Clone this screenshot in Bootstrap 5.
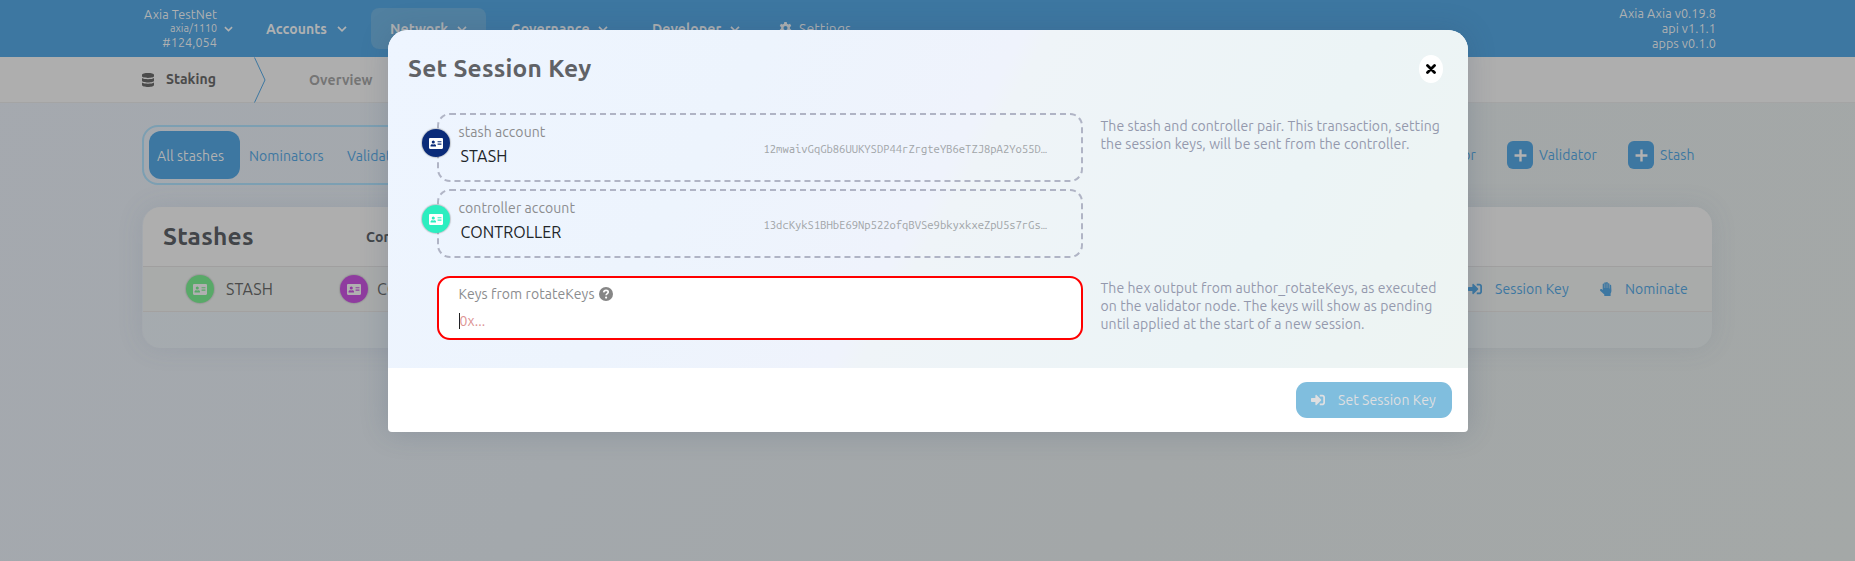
<!DOCTYPE html>
<html lang="en">
<head>
<meta charset="utf-8">
<title>Staking</title>
<link href="https://cdn.jsdelivr.net/npm/bootstrap@5.3.0/dist/css/bootstrap.min.css" rel="stylesheet">
<style>
:root{--blue:#3d77a1}
body{font-family:Ubuntu,"Noto Sans",sans-serif;font-size:14px;line-height:18px;color:#4b4b4b;min-height:561px;background:linear-gradient(120deg,#a5a9af 0,#a3a8ac 38%,#a3a7a8 65%,#a4a8a7 100%);overflow:hidden;letter-spacing:.08px}
svg{display:block;flex:none;fill:currentColor}
.t{white-space:nowrap;flex:none}
.topnav{height:57px;background:var(--blue);color:#afb1b2;padding:0 139px 0 143px}
.chain{width:74px;font-size:12.6px;line-height:14px;padding-bottom:1px}
.chain .sub{font-size:10.7px;letter-spacing:0}
.mi{height:41px;border-radius:8px}
.mi.on{background:#5180a0;width:115px;padding-left:19px}
.medium{font-weight:570}
.vers{font-size:12.6px;line-height:14.9px}
.subnav{height:46px;background:#aeaeae;border-bottom:1px solid #a4a4a4;padding-left:142px}
.wrapc{padding:22px 143px 0 142px}
.toggles{width:420px;height:60px;border:2px solid #7c9fb2;border-radius:16px;padding:7px 5px 5px;color:var(--blue)}
.toggles .on{width:91px;height:48px;margin-top:-2px;border-radius:12px;background:var(--blue);color:#b2b2b2;padding:1px 0 0 8px}
.acts{color:var(--blue)}
.plus{width:26px;height:28px;border-radius:6px;background:var(--blue);color:#b2b2b2}
.tbl{height:141px;margin-top:22px;margin-left:1px;border-radius:18px;overflow:hidden;background:rgba(170,174,178,.35)}
.shadowed{border-radius:18px;box-shadow:0 0 26px rgba(75,95,125,.13)}
.thd{height:59px;background:#aeaeae;padding-left:20px}
.trow{height:46px;background:#a9abaa;border-top:1px solid #a09f9f;border-bottom:1px solid #a3a1a0;padding-left:43px}
.big{font-size:24.5px;line-height:30px;font-weight:700;letter-spacing:.25px;padding-bottom:1px}
.av{width:28px;height:28px;border-radius:50%;flex:none;box-shadow:0 0 1px 1px rgba(120,120,120,.35);color:#fff}
.name{font-size:16px}
.dlg{top:30px;left:388px;width:1080px;height:402px;border-radius:20px 20px 4px 4px;background:#fff;box-shadow:0 0 28px rgba(50,75,105,.22);overflow:hidden}
.dbody{height:338px;background:linear-gradient(120deg,#eef5ff 0,#edf4fd 30%,#eff3fc 50%,#eff4f8 52%,#ecf4f6 78%,#eef4f2 100%)}
.dhead{height:76px;padding:0 25px 0 20px;color:#606266}
.x{width:24px;height:28px;border-radius:50%;background:#fff;color:#000}
.fields{width:646px;margin-left:49px;padding-top:7px}
.fld{height:69px;border:2px dashed #b0b4c5;border-radius:13px;padding:8px 33px 0 19.500px;margin-bottom:7px}
.fld .av{position:absolute;left:-17px;top:14px}
.lab{color:#8b8c8e}
.hash{font-family:"Ubuntu Mono","DejaVu Sans Mono",monospace;font-size:11.250px;letter-spacing:0;color:#a1a5a8;padding:10px 1px 0 0}
.keyf{height:64px;border:2px solid #f00;border-radius:13px;background:#fff;margin-top:18px;padding:7px 17px 0 19.500px}
.help{margin-left:17.500px;color:#9499ad;padding-top:11px}
.foot{height:64px;padding-right:16px}
.go{width:156px;height:36px;border-radius:11px;background:#80bede;color:#dedfe1;padding-left:15px}
</style>
</head>
<body>
<svg width="0" height="0" class="position-absolute">
<defs>
<symbol id="chev" viewBox="0 0 10 6"><path d="M1 .9 5 4.800 9 .9" fill="none" stroke="currentColor" stroke-width="1.7"/></symbol>
<symbol id="idcard" viewBox="0 0 576 448"><path fill-rule="evenodd" d="M528 0H48C21 0 0 21 0 48v352c0 27 21 48 48 48h480c27 0 48-21 48-48V48c0-27-21-48-48-48zM176 96a64 64 0 1 1 0 128 64 64 0 0 1 0-128zm112 237c0 10-10 19-22 19H86c-12 0-22-9-22-19v-19c0-32 30-58 67-58h5a103 103 0 0 0 80 0h5c37 0 67 26 67 58zm224-53c0 4-4 8-8 8H360c-4 0-8-4-8-8v-16c0-4 4-8 8-8h144c4 0 8 4 8 8zm0-64c0 4-4 8-8 8H360c-4 0-8-4-8-8v-16c0-4 4-8 8-8h144c4 0 8 4 8 8zm0-64c0 4-4 8-8 8H360c-4 0-8-4-8-8v-16c0-4 4-8 8-8h144c4 0 8 4 8 8z"/></symbol>
<symbol id="signin" viewBox="0 0 512 512"><path d="M416 448h-84c-7 0-12-5-12-12v-40c0-7 5-12 12-12h84c18 0 32-14 32-32V160c0-18-14-32-32-32h-84c-7 0-12-5-12-12V76c0-7 5-12 12-12h84c53 0 96 43 96 96v192c0 53-43 96-96 96zm-47-209L201 71c-15-15-41-5-41 17v96H24c-13 0-24 11-24 24v96c0 13 11 24 24 24h136v96c0 22 26 32 41 17l168-168c9-9 9-25 0-34z"/></symbol>
<symbol id="plus" viewBox="0 0 12 12"><path d="M4.900.5h2.200v4.400h4.400v2.200H7.100v4.400H4.900V7.100H.5V4.900h4.400z"/></symbol>
</defs></svg>

<nav class="topnav d-flex align-items-center">
  <div class="chain text-end t"><div>Axia TestNet</div><div class="sub">axia/1110</div><div>#124,054</div></div>
  <svg style="margin-left:7px" width="9" height="6"><use href="#chev"/></svg>
  <div class="d-flex align-items-center medium">
    <div class="mi d-flex align-items-center" style="width:105px;margin-left:33px"><span class="t" style="width:71px">Accounts</span><svg width="10" height="6"><use href="#chev"/></svg></div>
    <div class="mi on d-flex align-items-center"><span class="t" style="width:67px">Network</span><svg width="10" height="6"><use href="#chev"/></svg></div>
    <div class="mi d-flex align-items-center" style="width:141px;padding-left:25px"><span class="t" style="width:87px">Governance</span><svg width="10" height="6"><use href="#chev"/></svg></div>
    <div class="mi d-flex align-items-center" style="width:152px;padding-left:25px"><span class="t" style="width:78px">Developer</span><svg width="10" height="6"><use href="#chev"/></svg></div>
  </div>
  <svg width="13" height="13" viewBox="0 0 16 16"><path fill-rule="evenodd" d="M6.500 0h3l.4 2.200 1.600.9 2.100-.8 1.500 2.600-1.700 1.400v1.800l1.700 1.400-1.500 2.600-2.100-.8-1.600.9-.4 2.300h-3l-.4-2.300-1.600-.9-2.100.8L.9 9.500l1.700-1.400V6.300L.9 4.900l1.500-2.600 2.100.8 1.600-.9zM8 5a2.500 2.500 0 1 0 0 5 2.500 2.500 0 0 0 0-5z"/></svg>
  <span class="t" style="margin-left:7px">Settings</span>
  <div class="vers text-end ms-auto t">Axia Axia v0.19.8<br>api v1.1.1<br>apps v0.1.0</div>
</nav>

<div class="subnav d-flex align-items-center medium">
  <svg width="12" height="14" viewBox="0 0 12 14"><path d="M0 2C0-.6 12-.6 12 2v1.300C12 5.400 0 5.400 0 3.300zM0 5c2 1.600 10 1.600 12 0v2.800C12 10 0 10 0 7.800zM0 9.600c2 1.600 10 1.600 12 0v2.400c0 2.600-12 2.600-12 0z"/></svg>
  <span class="t fw-semibold" style="width:88px;margin-left:12px;padding-bottom:1px">Staking</span>
  <svg width="12" height="46" viewBox="0 0 12 46"><path d="M.5.5 11 23 .5 45.500" fill="none" stroke="#3d77a1"/></svg>
  <span class="t" style="margin-left:43px;padding-top:1px;color:#757575">Overview</span>
</div>

<main class="wrapc">
  <div class="d-flex align-items-center justify-content-between">
    <div class="toggles d-flex align-items-center">
      <div class="on d-flex align-items-center t">All stashes</div>
      <span class="t" style="width:98px;margin-left:9px">Nominators</span><span class="t">Validators</span>
    </div>
    <div class="acts d-flex align-items-center">
      <span class="t text-end" style="width:80px;margin-right:31px">Nominator</span>
      <span class="plus d-flex align-items-center justify-content-center"><svg width="13" height="13"><use href="#plus"/></svg></span>
      <span class="t" style="width:89px;margin-left:6px">Validator</span>
      <span class="plus d-flex align-items-center justify-content-center"><svg width="13" height="13"><use href="#plus"/></svg></span>
      <span class="t" style="width:52px;margin-left:6px">Stash</span>
    </div>
  </div>
  <div class="shadowed"><div class="tbl">
    <div class="thd d-flex align-items-center" style="color:#424549"><span class="big t" style="width:203px">Stashes</span><span class="fw-bold t">Controller</span></div>
    <div class="trow d-flex align-items-center">
      <span class="av d-flex align-items-center justify-content-center" style="background:#58a968;color:#b0b0b0"><svg width="14" height="11"><use href="#idcard"/></svg></span>
      <span class="name t" style="width:114px;margin-left:12px">STASH</span>
      <span class="av d-flex align-items-center justify-content-center" style="background:#8f3c9f;color:#b0b0b0"><svg width="14" height="11"><use href="#idcard"/></svg></span>
      <span class="name t" style="margin-left:9px">CONTROLLER</span>
      <div class="acts d-flex align-items-center ms-auto">
        <svg width="14" height="14"><use href="#signin"/></svg><span class="t" style="width:105px;margin-left:13px">Session Key</span>
        <svg width="12" height="14" viewBox="0 0 12 14"><path d="M2.700 8V2.300c0-1.200 1.600-1.200 1.600 0V1.200C4.300 0 6 0 6 1c0-1.200 1.800-1.200 1.800.2v1c0-1.200 1.700-1.200 1.700.1v1.300c0-1.100 1.700-1.100 1.700.2 0 4.200.8 5.200-.6 7.700V14H4.300v-1.500L.2 8.700C-.5 7.500 1 6.500 1.900 7.300z"/><path d="M4.400 2v4M6.100 1.500V6M7.800 2v4M9.500 3v3.500" stroke="#a9abaa" stroke-width=".4"/></svg><span class="t" style="width:87px;margin-left:13px">Nominate</span>
      </div>
    </div>
  </div></div>
</main>

<section class="dlg position-absolute" role="dialog">
  <div class="dbody">
    <header class="dhead d-flex align-items-center justify-content-between"><span class="big t">Set Session Key</span>
      <span class="x d-flex align-items-center justify-content-center" style="margin-top:2px"><svg width="10" height="10" viewBox="0 0 10 10"><path d="m1.500 1.500 7 7m0-7-7 7" stroke="#000" stroke-width="2.800" stroke-linecap="round"/></svg></span></header>
    <div class="d-flex">
      <div class="fields flex-shrink-0">
        <div class="fld position-relative">
          <span class="av d-flex align-items-center justify-content-center" style="background:#0a2b79"><svg width="14" height="11"><use href="#idcard"/></svg></span>
          <div class="d-flex align-items-center justify-content-between">
            <div><div class="lab t">stash account</div><div class="name t text-dark" style="margin:6px 0 0 2px">STASH</div></div>
            <span class="hash t">12mwaivGqGb86UUKYSDP44rZrgteYB6eTZJ8pA2Yo55D…</span></div>
        </div>
        <div class="fld position-relative">
          <span class="av d-flex align-items-center justify-content-center" style="background:#2ceec0"><svg width="14" height="11"><use href="#idcard"/></svg></span>
          <div class="d-flex align-items-center justify-content-between">
            <div><div class="lab t">controller account</div><div class="name t text-dark" style="margin:6px 0 0 2px">CONTROLLER</div></div>
            <span class="hash t">13dcKykS1BHbE69Np522ofqBVSe9bkyxkxeZpU5s7rGs…</span></div>
        </div>
        <div class="keyf">
          <div class="lab d-flex align-items-center"><span class="t" style="width:140px">Keys from rotateKeys</span>
            <svg width="14" height="14" viewBox="0 0 14 14"><circle cx="7" cy="7" r="7" fill="#868686"/><path d="M4.700 5.400C4.900 2.600 9.400 2.700 9.200 5.200 9.100 6.600 7.100 6.600 7.100 8.300" fill="none" stroke="#fff" stroke-width="1.700"/><circle cx="7.100" cy="10.600" r="1.100" fill="#fff"/></svg></div>
          <div class="d-flex align-items-center" style="margin-top:9px"><span style="width:1px;height:16px;background:#222"></span><span class="t" style="color:#dd9494">0x...</span></div>
        </div>
      </div>
      <div class="help t"><p class="mb-0">The stash and controller pair. This transaction, setting<br>the session keys, will be sent from the controller.</p>
      <p class="mb-0" style="margin-top:126px">The hex output from author_rotateKeys, as executed<br>on the validator node. The keys will show as pending<br>until applied at the start of a new session.</p></div>
    </div>
  </div>
  <footer class="foot d-flex align-items-center justify-content-end"><div class="go d-flex align-items-center"><svg width="14" height="14"><use href="#signin"/></svg><span class="t" style="margin-left:13px">Set Session Key</span></div></footer>
</section>
<script src="https://cdn.jsdelivr.net/npm/bootstrap@5.3.0/dist/js/bootstrap.bundle.min.js"></script>
</body>
</html>
